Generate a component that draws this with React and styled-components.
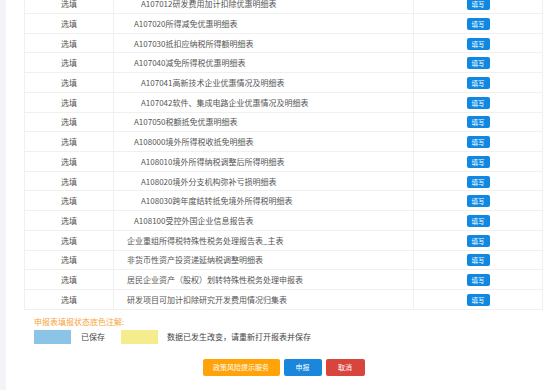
import React from 'react';
import styled, { createGlobalStyle } from 'styled-components';

const Global = createGlobalStyle`
  html, body { margin: 0; padding: 0; background: #f3f4f8; overflow: hidden; }
  body { font-family: "Noto Sans CJK SC", "Noto Sans", sans-serif; }
`;

const Page = styled.div`
  padding-left: 6px;
  height: 390px;
  overflow: hidden;
`;

const Panel = styled.div`
  background: #fff;
  min-height: 400px;
  padding: 0 11px 0 18px;
  margin-top: -5.73px;
`;

const Table = styled.div`
  width: 519px;
  border-left: 1px solid #f0f0f0;
  border-right: 1px solid #f0f0f0;
  box-sizing: border-box;
`;

const Row = styled.div`
  display: grid;
  grid-template-columns: 89px 300px 1fr;
  height: 19.73px;
  border-bottom: 1px solid #f0f0f0;
  box-sizing: border-box;
  font-size: 8px;
  color: #555;
`;

const Cell = styled.div`
  display: flex;
  align-items: center;
  justify-content: ${p => (p.$center ? 'center' : 'flex-start')};
  padding-left: ${p => (p.$level !== undefined ? 13 + p.$level * 7 : 0)}px;
  border-right: ${p => (p.$last ? 'none' : '1px solid #f0f0f0')};
  white-space: nowrap;
  overflow: hidden;
`;

const FillBtn = styled.button`
  width: 23px;
  height: 12px;
  padding: 0;
  border: none;
  border-radius: 2px;
  background: #1088e2;
  color: #fff;
  font-family: inherit;
  font-size: 6.5px;
  line-height: 12px;
  margin-top: 1px;
`;

const Legend = styled.div`
  padding: 6px 0 0 10px;
`;

const LegendTitle = styled.div`
  color: #f7a43a;
  font-size: 8px;
  line-height: 12px;
`;

const LegendRow = styled.div`
  display: flex;
  align-items: center;
  margin-top: 2px;
  font-size: 8px;
  color: #444;
`;

const Swatch = styled.div`
  width: 37px;
  height: 14px;
  background: ${p => p.$color};
`;

const SwatchLabel = styled.span`
  margin: 0 ${p => p.$gap}px 0 ${p => p.$lead}px;
`;

const Actions = styled.div`
  display: flex;
  justify-content: center;
  gap: 4px;
  width: 519px;
  margin-top: 15px;
`;

const ActionBtn = styled.button`
  height: 17px;
  width: ${p => p.$w}px;
  padding: 0;
  border: none;
  border-radius: 2px;
  background: ${p => p.$bg};
  color: #fff;
  font-family: inherit;
  font-size: 7px;
`;

const rows = [
  [2, 'A107012研发费用加计扣除优惠明细表'],
  [1, 'A107020所得减免优惠明细表'],
  [1, 'A107030抵扣应纳税所得额明细表'],
  [1, 'A107040减免所得税优惠明细表'],
  [2, 'A107041高新技术企业优惠情况及明细表'],
  [2, 'A107042软件、集成电路企业优惠情况及明细表'],
  [1, 'A107050税额抵免优惠明细表'],
  [1, 'A108000境外所得税收抵免明细表'],
  [2, 'A108010境外所得纳税调整后所得明细表'],
  [2, 'A108020境外分支机构弥补亏损明细表'],
  [2, 'A108030跨年度结转抵免境外所得税明细表'],
  [1, 'A108100受控外国企业信息报告表'],
  [0, '企业重组所得税特殊性税务处理报告表_主表'],
  [0, '非货币性资产投资递延纳税调整明细表'],
  [0, '居民企业资产（股权）划转特殊性税务处理申报表'],
  [0, '研发项目可加计扣除研究开发费用情况归集表'],
];

export default function App() {
  return (
    <>
      <Global />
      <Page>
        <Panel>
          <Table>
            {rows.map(([lvl, name]) => (
              <Row key={name}>
                <Cell $center>选填</Cell>
                <Cell $level={lvl}>{name}</Cell>
                <Cell $center $last>
                  <FillBtn>填写</FillBtn>
                </Cell>
              </Row>
            ))}
          </Table>
          <Legend>
            <LegendTitle>申报表填报状态底色注解:</LegendTitle>
            <LegendRow>
              <Swatch $color="#8cc4e8" />
              <SwatchLabel $lead={10} $gap={16}>已保存</SwatchLabel>
              <Swatch $color="#f5ec8e" />
              <SwatchLabel $lead={9} $gap={0}>数据已发生改变，请重新打开报表并保存</SwatchLabel>
            </LegendRow>
          </Legend>
          <Actions>
            <ActionBtn $w={77} $bg="#ffa308">政策风险提示服务</ActionBtn>
            <ActionBtn $w={38} $bg="#1a86dc">申报</ActionBtn>
            <ActionBtn $w={39} $bg="#d8453d">取消</ActionBtn>
          </Actions>
        </Panel>
      </Page>
    </>
  );
}
